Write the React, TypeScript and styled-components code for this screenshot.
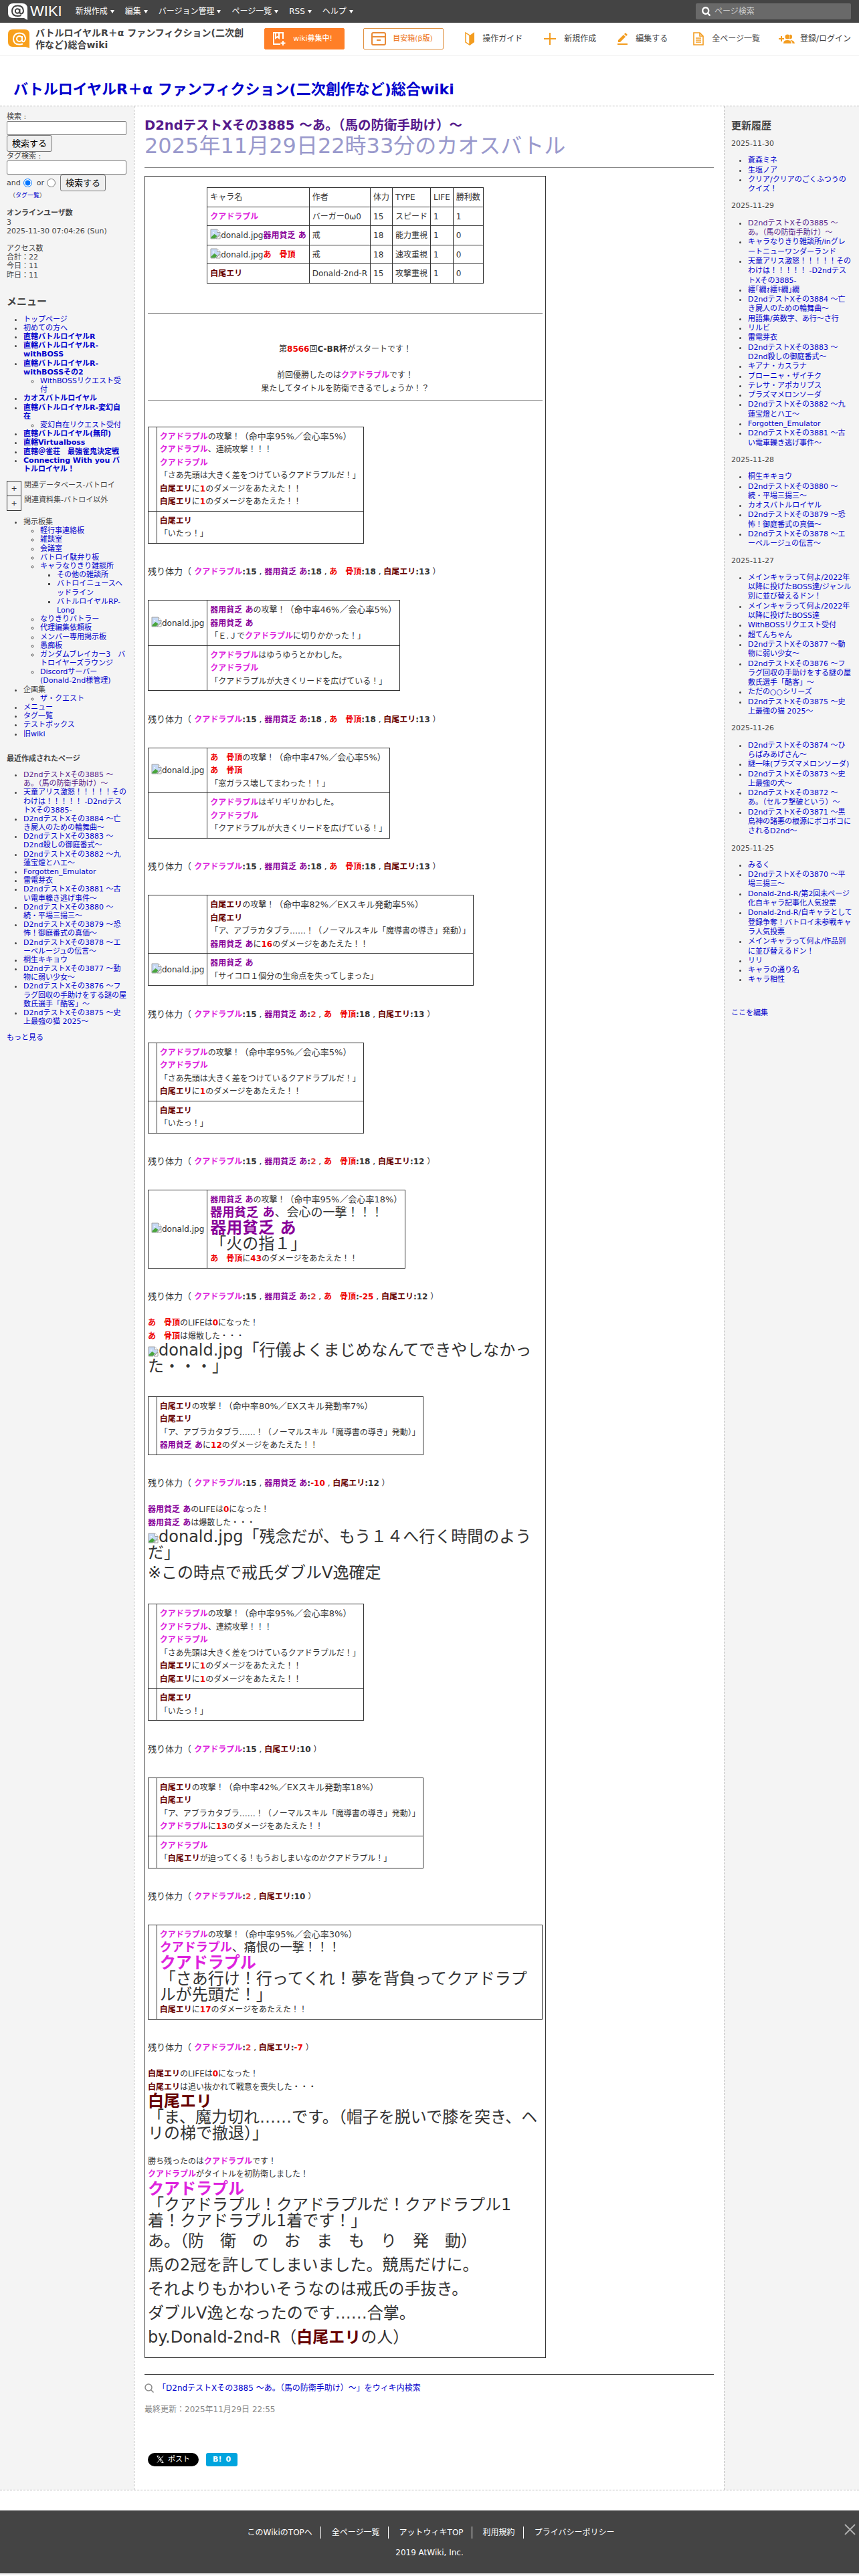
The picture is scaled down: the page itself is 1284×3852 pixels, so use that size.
import React from "react";
import styled, { createGlobalStyle } from "styled-components";

const font = `"DejaVu Sans", "Noto Sans CJK JP", sans-serif`;

const Global = createGlobalStyle`
  body { margin: 0; background: #fff; color: #333; font-family: ${font}; font-size: 13px; line-height: 1.5; }
  a { color: #0000cc; text-decoration: none; }
`;

/* ---------- header ---------- */
const Header = styled.header`
  font-size: 12px;
`;
const TopBar = styled.nav`
  display: flex;
  align-items: center;
  height: 34px;
  padding: 0 12px;
  background: #444;
  color: #fff;
`;
const Logo = styled.a`
  display: flex;
  align-items: center;
  gap: 4px;
  margin-right: 20px;
  && { color: #fff; }
  font: 22px/26px "Liberation Sans", sans-serif;
`;
const Menus = styled.div`
  display: flex;
  flex: 1;
  gap: 16px;
`;
const MenuButton = styled.button`
  display: flex;
  align-items: center;
  gap: 4px;
  padding: 0;
  border: 0;
  background: none;
  color: #fff;
  font: 12px/18px ${font};
  &::after {
    content: "";
    border: 3px solid transparent;
    border-top: 5px solid #fff;
    border-bottom: 0;
  }
`;
const PageSearch = styled.label`
  display: flex;
  align-items: center;
  gap: 6px;
  width: 232px;
  height: 24px;
  padding: 0 9px;
  box-sizing: border-box;
  border-radius: 2px;
  background: #696969;
  input {
    flex: 1;
    min-width: 0;
    padding: 0;
    border: 0;
    outline: 0;
    background: none;
    color: #fff;
    font: 12px/18px ${font};
  }
  input::placeholder { color: #ccc; }
`;
const WikiBar = styled.div`
  display: flex;
  align-items: center;
  height: 48px;
  padding: 0 12px;
  border-bottom: 1px solid #eee;
`;
const WikiName = styled.a`
  display: flex;
  align-items: center;
  gap: 9px;
  flex: 0 1 358px;
  margin-right: auto;
  && { color: #444; }
  font-size: 14px;
  font-weight: bold;
  line-height: 18px;
  svg { flex: none; }
`;
const Tools = styled.div`
  display: flex;
  align-items: center;
  svg { flex: none; }
`;
const PillLink = styled.a<{ $solid?: boolean }>`
  display: flex;
  align-items: center;
  gap: 10px;
  width: 120px;
  height: 32px;
  padding: 0 11px;
  margin-right: 28px;
  box-sizing: border-box;
  border: 1px solid ${(p) => (p.$solid ? "#ff7f27" : "#e09040")};
  border-radius: 2px;
  background: ${(p) => (p.$solid ? "#ff7f27" : "#fff")};
  && { color: ${(p) => (p.$solid ? "#fff" : "#ee8033")}; }
  font-size: 11px;
  font-weight: 500;
  white-space: nowrap;
`;
const Tool = styled.a<{ $lead?: number; $gap?: number }>`
  display: flex;
  align-items: center;
  gap: ${(p) => p.$gap ?? 12}px;
  margin-left: ${(p) => p.$lead ?? 32}px;
  && { color: #444; }
  white-space: nowrap;
`;
const SiteTitle = styled.h1`
  margin: 0;
  padding: 34px 20px 7px;
  border-bottom: 1px dashed #bbb;
  font-size: 22px;
  line-height: 34px;
`;

/* ---------- columns ---------- */
const Columns = styled.div`
  display: grid;
  grid-template-columns: 200px minmax(0, 1fr) 201px;
  border-bottom: 1px dashed #bbb;
`;
const Side = styled.aside<{ $right?: boolean }>`
  padding: ${(p) => (p.$right ? "20px 10px" : "9px 10px")};
  background: #f4f4f4;
  color: #444;
  font-size: 11px;
  line-height: ${(p) => (p.$right ? 1.3 : 1.2)};
  ul { margin: 11px 0; padding-left: 25px; list-style: disc; }
  ul ul { margin: 0; list-style: circle; }
  ul ul ul { list-style: square; }
  p { margin: 13px 0; }
`;
const SideTitle = styled.h2<{ $first?: boolean }>`
  margin: ${(p) => (p.$first ? 0 : 24)}px 0 11px;
  font-size: 15px;
  line-height: 18px;
`;
const DateTitle = styled.p`
  && { margin: 11px 0; }
`;
const RecentTitle = styled.h3`
  margin: 24px 0 11px;
  font-size: 11px;
`;
const Field = styled.label`
  display: block;
`;
const TextInput = styled.input`
  display: block;
  width: 179px;
  max-width: 100%;
  height: 21px;
  box-sizing: border-box;
  border: 1px solid #767676;
  border-radius: 2px;
  background: #fff;
`;
const Submit = styled.button`
  height: 25px;
  padding: 0 7px;
  border: 1px solid #767676;
  border-radius: 3px;
  background: #efefef;
  color: #000;
  font: 13px/21px ${font};
`;
const TagRow = styled.div`
  display: flex;
  align-items: center;
  label { display: flex; align-items: center; margin-right: 4px; }
  input { width: 13px; height: 13px; margin: 0 3px 0 4px; }
`;
const TagIndex = styled.div`
  padding-left: 4px;
  font-size: 9px;
  line-height: 13px;
`;
const Folds = styled.div`
  margin: 11px 0 10px;
`;
const Fold = styled.div`
  display: flex;
  gap: 4px;
  height: 22px;
  button {
    width: 22px;
    height: 23px;
    padding: 0;
    border: 1px solid #333;
    background: none;
    color: #333;
    font: 11px/18px ${font};
  }
`;
const Visited = styled.a`
  && { color: #551a8b; }
`;
const EditHere = styled.div`
  margin-top: 35px;
`;

/* ---------- article ---------- */
const Main = styled.main`
  padding: 17px 15px 35px;
  border: 1px dashed #bbb;
  border-width: 0 1px;
`;
const PageTitle = styled.h2`
  margin: 0;
  font-size: 1.5em;
  line-height: 23px;
`;
const SubTitle = styled.div`
  color: #9999cc;
  font-size: 32px;
  line-height: 38px;
`;
const Rule = styled.hr<{ $dark?: boolean; $gap: string }>`
  height: 1px;
  margin: ${(p) => p.$gap};
  border: 0;
  background: ${(p) => (p.$dark ? "#333" : "#888")};
`;
const Grid = styled.table`
  border-collapse: collapse;
  margin: 13px 0;
  td, th {
    padding: 4px;
    border: 1px solid #333;
    font-weight: normal;
    text-align: left;
  }
`;
const Frame = styled.section`
  width: 600px;
  max-width: 100%;
  margin-bottom: 24px;
  padding: 3px 4px 12px;
  box-sizing: border-box;
  border: 1px solid #333;
`;
const Roster = styled(Grid)`
  margin: 13px auto;
  td, th { white-space: nowrap; }
`;
const Centered = styled.div`
  text-align: center;
`;
const S = styled.span`
  font-size: 12px;
`;
const Loud = styled.span`
  font-size: 18px;
  line-height: 1;
`;
const Shout = styled.div`
  font-size: 24px;
  line-height: 1;
`;
const Verse = styled.div<{ $after?: number }>`
  margin-bottom: ${(p) => p.$after ?? 0}px;
  font-size: 24px;
`;
const Name = styled.strong<{ $tone: string }>`
  color: ${(p) => p.$tone};
`;
const Alt = styled.span`
  display: inline-block;
  line-height: 1;
  white-space: nowrap;
  svg { vertical-align: -2px; }
`;

const Q = () => <Name $tone="#dd22dd">クアドラプル</Name>;
const K = () => <Name $tone="#880099">器用貧乏 あ</Name>;
const A = () => <Name $tone="#ee0000">あ　骨頂</Name>;
const E = () => <Name $tone="#660000">白尾エリ</Name>;
const R = ({ children }: { children: React.ReactNode }) => <Name $tone="#ee0000">{children}</Name>;

const Missing = () => (
  <Alt>
    <svg width="16" height="16" viewBox="0 0 16 16" aria-hidden="true">
      <path d="M1 1h9.500l4.500 4.500v2L8 15H1z" fill="#c6d9f5" stroke="#a0a0a0" />
      <path d="M10.500 1v4.500H15" fill="#fff" stroke="#a0a0a0" />
      <path d="M3.500 6.500q1.500-3 3 0z" fill="#fff" />
      <path d="M1.500 14.500v-2l5-4.500 4 3-3 3.500z" fill="#4aa53c" />
      <path d="M15 9v6H9z" fill="#fff" stroke="#a0a0a0" />
    </svg>
    donald.jpg
  </Alt>
);

type Row = [boolean, React.ReactNode];
const Battle = ({ rows }: { rows: Row[] }) => (
  <Grid>
    <tbody>
      {rows.map(([pic, body], i) => (
        <tr key={i}>
          <td><S>{pic ? <Missing /> : "\u00a0"}</S></td>
          <td>{body}</td>
        </tr>
      ))}
    </tbody>
  </Grid>
);

type Stat = [React.ReactNode, number];
const Status = ({ list }: { list: Stat[] }) => (
  <>
    残り体力（ <S>{list.map(([who, hp], i) => (
      <React.Fragment key={i}>
        {i > 0 && " , "}
        {who}
        <strong>:</strong>
        {hp < 10 ? <Name $tone={hp < 0 ? "#ee0000" : "#dd4444"}>{hp}</Name> : <strong>{hp}</strong>}
      </React.Fragment>
    ))} ）</S>
  </>
);

const Hit = ({ who, n }: { who: React.ReactNode; n: number }) => (
  <S>{who}に<R>{n}</R>のダメージをあたえた！！</S>
);
const Attack = ({ who, rate }: { who: React.ReactNode; rate: string }) => (
  <><S>{who}の攻撃！</S>（命中率{rate}）<br /></>
);
const Spell = () => <S>「ア、アブラカタブラ……！（ノーマルスキル「魔導書の導き」発動）」</S>;
const Lead = () => <S>「さあ先頭は大きく差をつけているクアドラプルだ！」</S>;

/* ---------- lists ---------- */
const T = (n: number) => `D2ndテストXその${n} `;
const p3885 = "D2ndテストXその3885 ～あ。（馬の防衛手助け）～";
const alice = "天童アリス激怒！！！！！そのわけは！！！！！ -D2ndテストXその3885-";
const p3884 = T(3884) + "～亡き屍人のための輪舞曲～";
const p3883 = T(3883) + "～D2nd殺しの御庭番式～";
const p3882 = T(3882) + "～九蓮宝燈とハエ～";
const p3881 = T(3881) + "～古い電車轢き逃げ事件～";
const p3880 = T(3880) + "～続・平場三揚三～";
const p3879 = T(3879) + "～恐怖！御庭番式の真価～";
const p3878 = T(3878) + "～エーベルージュの伝言～";
const p3877 = T(3877) + "～動物に弱い少女～";
const p3876 = T(3876) + "～フラグ回収の手助けをする謎の屋敷氏選手「酷客」～";
const p3875 = T(3875) + "～史上最強の猫 2025～";

const Links = ({ items }: { items: string[] }) => (
  <ul>
    {items.map((t) => (
      <li key={t}>{t === p3885 ? <Visited href="#">{t}</Visited> : <a href="#">{t}</a>}</li>
    ))}
  </ul>
);

const history: [string, string[]][] = [
  ["2025-11-30", ["蒼森ミネ", "生塩ノア", "クリア/クリアのごくふつうのクイズ！"]],
  ["2025-11-29", [p3885, "キャラなりきり雑談所/inグレートニューワンダーランド", alice, "繧｢繝ｫ繧ｷ繝｣繝", p3884, "用語集/英数字、あ行～さ行", "リルビ", "雷電芽衣", p3883, "キアナ・カスラナ", "ブローニャ・ザイチク", "テレサ・アポカリプス", "プラズマメロンソーダ", p3882, "Forgotten_Emulator", p3881]],
  ["2025-11-28", ["桐生キキョウ", p3880, "カオスバトルロイヤル", p3879, p3878]],
  ["2025-11-27", ["メインキャラって何よ/2022年以降に投げたBOSS達/ジャンル別に並び替えるドン！", "メインキャラって何よ/2022年以降に投げたBOSS達", "WithBOSSリクエスト受付", "超てんちゃん", p3877, p3876, "ただの○○シリーズ", p3875]],
  ["2025-11-26", [T(3874) + "～ひらばみあげさん～", "謎一味(プラズマメロンソーダ)", T(3873) + "～史上最強の犬～", T(3872) + "～あ。（セルフ撃破という）～", T(3871) + "～黒鳥神の諸悪の根源にボコボコにされるD2nd～"]],
  ["2025-11-25", ["みるく", T(3870) + "～平場三揚三～", "Donald-2nd-R/第2回未ページ化自キャラ記事化人気投票", "Donald-2nd-R/自キャラとして登録争奪！バトロイ未参戦キャラ人気投票", "メインキャラって何よ/作品別に並び替えるドン！", "リリ", "キャラの通り名", "キャラ相性"]],
];

const L = ({ b, children }: { b?: boolean; children: React.ReactNode }) =>
  b ? <strong><a href="#">{children}</a></strong> : <a href="#">{children}</a>;

/* ---------- footer ---------- */
const SearchLine = styled.div`
  display: flex;
  align-items: center;
  gap: 6px;
  margin-bottom: 14px;
  font-size: 12px;
  line-height: 18px;
`;
const Updated = styled.div`
  color: #888;
  font-size: 12px;
  line-height: 18px;
`;
const Share = styled.div`
  display: flex;
  gap: 11px;
  margin: 56px 5px 0;
`;
const ShareLink = styled.a<{ $bg: string; $round: number }>`
  display: flex;
  align-items: center;
  gap: 6px;
  height: 20px;
  padding: 0 13px;
  border-radius: ${(p) => p.$round}px;
  background: ${(p) => p.$bg};
  && { color: #fff; }
  font-size: 11px;
  line-height: 20px;
`;
const HatenaLink = styled(ShareLink)`
  padding: 0 10px;
  font-weight: bold;
`;
const Footer = styled.footer`
  position: relative;
  margin-top: 30px;
  padding: 24px 0 22px;
  border-bottom: 2px solid #eee;
  background: #444;
  color: #fff;
  font-size: 12px;
  line-height: 18px;
  text-align: center;
  div { display: flex; justify-content: center; margin-bottom: 12px; }
  div a { padding: 0 12px 0 16px; color: #fff; }
  div a + a { border-left: 1px solid #fff; }
`;
const Close = styled.button`
  position: absolute;
  top: 20px;
  right: 5px;
  padding: 0;
  border: 0;
  background: none;
  line-height: 0;
`;

const orange = "#f39c1f";

export default function App() {
  return (
    <>
      <Global />
      <Header>
        <TopBar>
          <Logo href="#" aria-label="@WIKI">
            <svg width="29" height="25" viewBox="0 0 29 25" aria-hidden="true">
              <path d="M8 0h13q8 0 8 8v17l-5-3H8q-8 0-8-7V8q0-8 8-8z" fill="#fff" />
              <circle cx="14" cy="11.500" r="3.200" fill="none" stroke="#444" strokeWidth="2" />
              <path d="M17.500 8v5.500q.5 2.500 3 2 2.500-1 2.500-4.500Q22.500 3.500 14.500 3.500T6 11.500q0 7.500 8.500 7.500 3 0 5-1" fill="none" stroke="#444" strokeWidth="2" />
            </svg>
            WIKI
          </Logo>
          <Menus>
            {["新規作成", "編集", "バージョン管理", "ページ一覧", "RSS", "ヘルプ"].map((t) => <MenuButton key={t}>{t}</MenuButton>)}
          </Menus>
          <PageSearch>
            <svg width="13" height="14" viewBox="0 0 13 14" fill="none" stroke="#fff" strokeWidth="2.400" aria-hidden="true"><ellipse cx="5.700" cy="6" rx="4.500" ry="4.800" /><path d="M8.500 9.500l4 4" /></svg>
            <input placeholder="ページ検索" aria-label="ページ検索" />
          </PageSearch>
        </TopBar>
        <WikiBar>
          <WikiName href="#">
            <svg width="32" height="28" viewBox="0 0 32 28" aria-hidden="true">
              <path d="M7 0h18q7 0 7 7v21l-6-2H7q-7 0-7-7V7q0-7 7-7z" fill="#f8a01c" />
              <circle cx="17" cy="14" r="4" fill="none" stroke="#fff" strokeWidth="2" />
              <path d="M21 10v6.500q.5 2.500 3 1.500 2-1.500 2-5Q25 5.500 17 5.500T8 14q0 8.500 9 8.500 3 0 5-1" fill="none" stroke="#fff" strokeWidth="2" />
            </svg>
            <span>バトルロイヤルR＋α ファンフィクション(二次創作など)総合wiki</span>
          </WikiName>
          <Tools>
            <PillLink $solid href="#">
              <svg width="21" height="22" viewBox="0 0 21 22" fill="none" stroke="#fff" strokeWidth="2" aria-hidden="true"><path d="M12 19H2V2h14v9" /><path d="M5 2v8l2.500-2L10 10V2M16 14v7M12.500 17.500h7" /></svg>
              wiki募集中!
            </PillLink>
            <PillLink href="#">
              <svg width="22" height="20" viewBox="0 0 22 20" fill="none" stroke="#e98a35" strokeWidth="2" aria-hidden="true"><rect x="1" y="1" width="20" height="18" rx="2" /><path d="M1 7h20M8 12h6" /></svg>
              目安箱(β版)
            </PillLink>
            <Tool href="#" $lead={4}>
              <svg width="14" height="20" viewBox="0 0 14 20" aria-hidden="true"><path d="M1 1l6 4v14l-6-4z" fill="#fff" stroke={orange} strokeWidth="1.500" /><path d="M7 5l7-5v15l-7 5z" fill={orange} /></svg>
              操作ガイド
            </Tool>
            <Tool href="#">
              <svg width="18" height="18" viewBox="0 0 18 18" stroke={orange} strokeWidth="2" aria-hidden="true"><path d="M9 0v18M0 9h18" /></svg>
              新規作成
            </Tool>
            <Tool href="#">
              <svg width="15" height="18" viewBox="0 0 15 18" fill={orange} aria-hidden="true"><path d="M0 16h15v2H0zM1 14v-3l8-8 3 3-8 8zM10 2l2-2 3 3-2 2z" /></svg>
              編集する
            </Tool>
            <Tool href="#" $lead={38}>
              <svg width="16" height="20" viewBox="0 0 16 20" fill="none" stroke={orange} strokeWidth="2" aria-hidden="true"><path d="M1 1h9l5 5v13H1zM10 1v5h5M4 9h8M4 12h8M4 15h8" strokeWidth="1.600" /></svg>
              全ページ一覧
            </Tool>
            <Tool href="#" $lead={28} $gap={8}>
              <svg width="24" height="15" viewBox="0 0 24 15" fill={orange} aria-hidden="true"><path d="M3 3h2v3h3v2H5v3H3V8H0V6h3zM7 14q0-5 6-5t6 5zM17 9q6 0 7 5h-3.500q0-3-3.500-5zM16 1q4-1.500 4 3 0 4-4 3 2-3 0-6z" /><circle cx="13" cy="4" r="3.500" /></svg>
              登録/ログイン
            </Tool>
          </Tools>
        </WikiBar>
        <SiteTitle><a href="#">バトルロイヤルR＋α ファンフィクション(二次創作など)総合wiki</a></SiteTitle>
      </Header>

      <Columns>
        <Side>
          <form>
            <Field>検索 :<TextInput name="keyword" /></Field>
            <Submit type="button">検索する</Submit>
            <Field>タグ検索 :<TextInput name="tag" /></Field>
            <TagRow>
              <label>and <input type="radio" name="andor" defaultChecked /></label>
              <label>or <input type="radio" name="andor" /></label>
              <Submit type="button">検索する</Submit>
            </TagRow>
          </form>
          <TagIndex>（<a href="#">タグ一覧</a>）</TagIndex>
          <p><strong>オンラインユーザ数</strong><br />3<br />2025-11-30 07:04:26 (Sun)</p>
          <p>アクセス数<br />合計：22<br />今日：11<br />昨日：11</p>
          <SideTitle>メニュー</SideTitle>
          <ul>
            <li><L>トップページ</L></li>
            <li><L>初めての方へ</L></li>
            <li><L b>直轄バトルロイヤルR</L></li>
            <li><L b>直轄バトルロイヤルR-withBOSS</L></li>
            <li><L b>直轄バトルロイヤルR-withBOSSその2</L><ul><li><L>WithBOSSリクエスト受付</L></li></ul></li>
            <li><L b>カオスバトルロイヤル</L></li>
            <li><L b>直轄バトルロイヤルR-変幻自在</L><ul><li><L>変幻自在リクエスト受付</L></li></ul></li>
            <li><L b>直轄バトルロイヤル(無印)</L></li>
            <li><L b>直轄Virtualboss</L></li>
            <li><L b>直轄＠雀荘　最強雀鬼決定戦</L></li>
            <li><L b>Connecting With you バトルロイヤル！</L></li>
          </ul>
          <Folds>
            <Fold><button aria-label="関連データベースを開く">+</button>関連データベース-バトロイ</Fold>
            <Fold><button aria-label="関連資料集を開く">+</button>関連資料集-バトロイ以外</Fold>
          </Folds>
          <ul>
            <li>掲示板集
              <ul>
                <li><L>軽行事連絡板</L></li>
                <li><L>雑談室</L></li>
                <li><L>会議室</L></li>
                <li><L>バトロイ駄弁り板</L></li>
                <li><L>キャラなりきり雑談所</L>
                  <ul>
                    <li><L>その他の雑談所</L></li>
                    <li><L>バトロイニュースヘッドライン</L></li>
                    <li><L>バトルロイヤルRP-Long</L></li>
                  </ul>
                </li>
                <li><L>なりきりバトラー</L></li>
                <li><L>代理編集依頼板</L></li>
                <li><L>メンバー専用掲示板</L></li>
                <li><L>愚痴板</L></li>
                <li><L>ガンダムブレイカー3　バトロイヤーズラウンジ</L></li>
                <li><L>Discordサーバー(Donald-2nd様管理)</L></li>
              </ul>
            </li>
            <li>企画集<ul><li><L>ザ・クエスト</L></li></ul></li>
            <li><L>メニュー</L></li>
            <li><L>タグ一覧</L></li>
            <li><L>テストボックス</L></li>
            <li><L>旧wiki</L></li>
          </ul>
          <RecentTitle>最近作成されたページ</RecentTitle>
          <Links items={[p3885, alice, p3884, p3883, p3882, "Forgotten_Emulator", "雷電芽衣", p3881, p3880, p3879, p3878, "桐生キキョウ", p3877, p3876, p3875]} />
          <a href="#">もっと見る</a>
        </Side>

        <Main>
          <PageTitle><Visited href="#">{p3885}</Visited></PageTitle>
          <SubTitle>2025年11月29日22時33分のカオスバトル</SubTitle>
          <Rule $gap="13px 0 12px" />
          <Frame>
            <Roster>
              <thead>
                <tr>{["キャラ名", "作者", "体力", "TYPE", "LIFE", "勝利数"].map((h) => <th key={h}><S>{h}</S></th>)}</tr>
              </thead>
              <tbody>
                {([
                  [<Q />, "バーガー0ω0", "15", "スピード", "1", "1"],
                  [<><Missing /><K /></>, "戒", "18", "能力重視", "1", "0"],
                  [<><Missing /><A /></>, "戒", "18", "速攻重視", "1", "0"],
                  [<E />, "Donald-2nd-R", "15", "攻撃重視", "1", "0"],
                ] as React.ReactNode[][]).map((r, i) => (
                  <tr key={i}>{r.map((c, j) => <td key={j}><S>{c}</S></td>)}</tr>
                ))}
              </tbody>
            </Roster>
            <br />
            <Rule $gap="12px 0 4px" />
            <Centered>
              <br /><br />
              <S>第<R>8566</R>回<strong>C-BR杯</strong>がスタートです！</S><br />
              <br />
              <S>前回優勝したのは<Q />です！</S><br />
              <S>果たしてタイトルを防衛できるでしょうか！？</S>
            </Centered>
            <Rule $gap="8px 0 6px" />
            <br />
            <Battle rows={[
              [false, <><Attack who={<Q />} rate="95%／会心率5%" /><S><Q />、連続攻撃！！！</S><br /><S><Q /></S><br /><Lead /><br /><Hit who={<E />} n={1} /><br /><Hit who={<E />} n={1} /></>],
              [false, <><S><E /></S><br /><S>「いたっ！」</S></>],
            ]} />
            <br /><Status list={[[<Q />, 15], [<K />, 18], [<A />, 18], [<E />, 13]]} /><br /><br />
            <Battle rows={[
              [true, <><Attack who={<K />} rate="46%／会心率5%" /><S><K /></S><br /><S>「Ｅ.Ｊで<Q />に切りかかった！」</S></>],
              [false, <><S><Q />はゆうゆうとかわした。</S><br /><S><Q /></S><br /><S>「クアドラプルが大きくリードを広げている！」</S></>],
            ]} />
            <br /><Status list={[[<Q />, 15], [<K />, 18], [<A />, 18], [<E />, 13]]} /><br /><br />
            <Battle rows={[
              [true, <><Attack who={<A />} rate="47%／会心率5%" /><S><A /></S><br /><S>「窓ガラス壊してまわった！！」</S></>],
              [false, <><S><Q />はギリギリかわした。</S><br /><S><Q /></S><br /><S>「クアドラプルが大きくリードを広げている！」</S></>],
            ]} />
            <br /><Status list={[[<Q />, 15], [<K />, 18], [<A />, 18], [<E />, 13]]} /><br /><br />
            <Battle rows={[
              [false, <><Attack who={<E />} rate="82%／EXスキル発動率5%" /><S><E /></S><br /><Spell /><br /><Hit who={<K />} n={16} /></>],
              [true, <><S><K /></S><br /><S>「サイコロ１個分の生命点を失ってしまった」</S></>],
            ]} />
            <br /><Status list={[[<Q />, 15], [<K />, 2], [<A />, 18], [<E />, 13]]} /><br /><br />
            <Battle rows={[
              [false, <><Attack who={<Q />} rate="95%／会心率5%" /><S><Q /></S><br /><Lead /><br /><Hit who={<E />} n={1} /></>],
              [false, <><S><E /></S><br /><S>「いたっ！」</S></>],
            ]} />
            <br /><Status list={[[<Q />, 15], [<K />, 2], [<A />, 18], [<E />, 12]]} /><br /><br />
            <Battle rows={[
              [true, <><Attack who={<K />} rate="95%／会心率18%" /><Loud><K />、会心の一撃！！！</Loud><Shout><K /><br />「火の指１」</Shout><Hit who={<A />} n={43} /></>],
            ]} />
            <br /><Status list={[[<Q />, 15], [<K />, 2], [<A />, -25], [<E />, 12]]} /><br /><br />
            <S><A />のLIFEは<R>0</R>になった！<br /><A />は爆散した・・・</S>
            <Shout><Missing />「行儀よくまじめなんてできやしなかった・・・」</Shout>
            <br />
            <Battle rows={[
              [false, <><Attack who={<E />} rate="80%／EXスキル発動率7%" /><S><E /></S><br /><Spell /><br /><Hit who={<K />} n={12} /></>],
            ]} />
            <br /><Status list={[[<Q />, 15], [<K />, -10], [<E />, 12]]} /><br /><br />
            <S><K />のLIFEは<R>0</R>になった！<br /><K />は爆散した・・・</S>
            <Shout><Missing />「残念だが、もう１４へ行く時間のようだ」</Shout>
            <Verse $after={28}>※この時点で戒氏ダブルV逸確定</Verse>
            <Battle rows={[
              [false, <><Attack who={<Q />} rate="95%／会心率8%" /><S><Q />、連続攻撃！！！</S><br /><S><Q /></S><br /><Lead /><br /><Hit who={<E />} n={1} /><br /><Hit who={<E />} n={1} /></>],
              [false, <><S><E /></S><br /><S>「いたっ！」</S></>],
            ]} />
            <br /><Status list={[[<Q />, 15], [<E />, 10]]} /><br /><br />
            <Battle rows={[
              [false, <><Attack who={<E />} rate="42%／EXスキル発動率18%" /><S><E /></S><br /><Spell /><br /><Hit who={<Q />} n={13} /></>],
              [false, <><S><Q /></S><br /><S>「<E />が迫ってくる！もうおしまいなのかクアドラプル！」</S></>],
            ]} />
            <br /><Status list={[[<Q />, 2], [<E />, 10]]} /><br /><br />
            <Battle rows={[
              [false, <><Attack who={<Q />} rate="95%／会心率30%" /><Loud><Q />、痛恨の一撃！！！</Loud><Shout><Q /><br />「さあ行け！行ってくれ！夢を背負ってクアドラプルが先頭だ！」</Shout><Hit who={<E />} n={17} /></>],
            ]} />
            <br /><Status list={[[<Q />, 2], [<E />, -7]]} /><br /><br />
            <S><E />のLIFEは<R>0</R>になった！<br /><E />は追い抜かれて戦意を喪失した・・・</S>
            <Shout><E /><br />「ま、魔力切れ……です。（帽子を脱いで膝を突き、ヘリの梯で撤退）」</Shout>
            <br />
            <S>勝ち残ったのは<Q />です！<br /><Q />がタイトルを初防衛しました！</S>
            <Shout><Q /><br />「クアドラプル！クアドラプルだ！クアドラプル1着！クアドラプル1着です！」</Shout>
            <Verse>
              あ。（防　衛　の　お　ま　も　り　発　動）<br />
              馬の2冠を許してしまいました。競馬だけに。<br />
              それよりもかわいそうなのは戒氏の手抜き。<br />
              ダブルV逸となったのです……合掌。<br />
              by.Donald-2nd-R（<E />の人）
            </Verse>
          </Frame>
          <Rule $dark $gap="24px 0 11px" />
          <SearchLine>
            <svg width="14" height="14" viewBox="0 0 14 14" fill="none" stroke="#888" strokeWidth="1.500" aria-hidden="true"><circle cx="6" cy="6" r="5" /><path d="M9.500 9.500l4 4" /></svg>
            <a href="#">「{p3885}」をウィキ内検索</a>
          </SearchLine>
          <Updated>最終更新：2025年11月29日 22:55</Updated>
          <Share>
            <ShareLink $bg="#000" $round={10} href="#">
              <svg width="11" height="11" viewBox="0 0 11 11" fill="none" stroke="#fff" aria-hidden="true"><path d="M.7.5h2.500l7 10H7.700zM10 .5L1 10.500" /></svg>
              ポスト
            </ShareLink>
            <HatenaLink $bg="#00a4de" $round={3} href="#"><span>B!</span><span>0</span></HatenaLink>
          </Share>
        </Main>

        <Side $right>
          <SideTitle $first>更新履歴</SideTitle>
          {history.map(([d, items]) => (
            <React.Fragment key={d}>
              <DateTitle>{d}</DateTitle>
              <Links items={items} />
            </React.Fragment>
          ))}
          <EditHere><a href="#">ここを編集</a></EditHere>
        </Side>
      </Columns>

      <Footer>
        <div>
          {["このWikiのTOPへ", "全ページ一覧", "アットウィキTOP", "利用規約", "プライバシーポリシー"].map((t) => <a key={t} href="#">{t}</a>)}
        </div>
        2019 AtWiki, Inc.
        <Close aria-label="閉じる">
          <svg width="17" height="17" viewBox="0 0 17 17" stroke="#aaa" strokeWidth="2" aria-hidden="true"><path d="M1 1l15 15M16 1L1 16" /></svg>
        </Close>
      </Footer>
    </>
  );
}
